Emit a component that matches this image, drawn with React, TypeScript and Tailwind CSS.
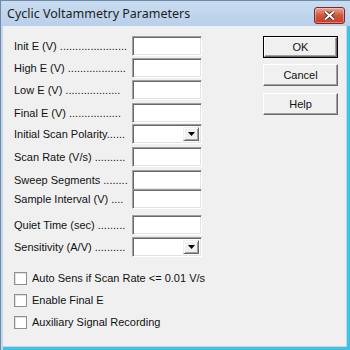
import React from 'react';

const rows: { label: string; top: number; combo?: boolean }[] = [
  { label: 'Init E (V) ......................', top: 10 },
  { label: 'High E (V) ...................', top: 2 },
  { label: 'Low E (V) ..................', top: 2 },
  { label: 'Final E (V) .................', top: 3 },
  { label: 'Initial Scan Polarity......', top: 1, combo: true },
  { label: 'Scan Rate (V/s) ..........', top: 3 },
  { label: 'Sweep Segments ........', top: 3 },
  { label: 'Sample Interval (V) ....', top: -1 },
  { label: 'Quiet Time (sec) .........', top: 6 },
  { label: 'Sensitivity (A/V) ..........', top: 2, combo: true },
];

const checks = ['Auto Sens if Scan Rate <= 0.01 V/s', 'Enable Final E', 'Auxiliary Signal Recording'];

function Field({ combo }: { combo?: boolean }) {
  return (
    <div className="w-[70px] h-[20px] bg-white border border-t-[#a0a0a0] border-l-[#a0a0a0] border-b-white border-r-white shadow-[inset_1px_1px_0_#696969,inset_-1px_-1px_0_#e3e3e3] flex justify-end items-stretch p-[2px]">
      {combo && (
        <div className="w-[16px] bg-[#f0f0f0] border border-t-[#f0f0f0] border-l-[#f0f0f0] border-b-[#696969] border-r-[#696969] shadow-[inset_1px_1px_0_#ffffff,inset_-1px_-1px_0_#a0a0a0] flex items-center justify-center">
          <svg width="7" height="4" viewBox="0 0 7 4">
            <path d="M0 0h7L3.5 4z" fill="#000" />
          </svg>
        </div>
      )}
    </div>
  );
}

function Btn({ label, def }: { label: string; def?: boolean }) {
  return (
    <div
      className={`w-[75px] h-[22px] flex items-center justify-center bg-[#f0f0f0] ${
        def ? 'border border-black' : ''
      }`}
    >
      <div className="w-full h-full flex items-center justify-center border border-t-white border-l-white border-b-[#696969] border-r-[#696969] shadow-[inset_-1px_-1px_0_#a0a0a0]">
        {label}
      </div>
    </div>
  );
}

export default function App() {
  return (
    <div
      className="w-[350px] h-[350px] overflow-hidden flex flex-col bg-[#c2d6ec] border-t border-l border-[#6f8aa8] text-[11px] text-[#111]"
      style={{ fontFamily: '"Liberation Sans", Arial, sans-serif' }}
    >
      {/* Title bar */}
      <div className="h-[25px] shrink-0 flex items-center justify-between pl-[6px] pr-[5px] bg-gradient-to-b from-[#c9dcf0] to-[#b9d0ea]">
        <span className="text-[12.5px] text-[#1e1e1e] mt-[2px]" style={{ fontFamily: '"Noto Sans", sans-serif' }}>
          Cyclic Voltammetry Parameters
        </span>
        <div className="w-[31px] h-[17px] mt-[3px] rounded-[3px] border border-[#7a2a20] bg-gradient-to-b from-[#e8a593] via-[#d2553f] to-[#c2402b] flex items-center justify-center shadow-[inset_0_0_0_1px_rgba(255,255,255,0.35)]">
          <svg width="11" height="9" viewBox="0 0 11 9">
            <path d="M1 0.5L10 8.5M10 0.5L1 8.5" stroke="#4a1a14" strokeWidth="3.4" />
            <path d="M1 0.5L10 8.5M10 0.5L1 8.5" stroke="#ffffff" strokeWidth="2" />
          </svg>
        </div>
      </div>

      {/* Client area */}
      <div className="flex-1 flex ml-[2px] border-r-[3px] border-b-[3px] border-[#38c3ee]">
        <div className="flex-1 bg-[#f0f0f0] border-r border-b border-[#d4d4d4] flex">
          <div className="flex flex-col pl-[11px] w-[205px]">
            {rows.map((r, i) => (
              <div key={i} className="flex items-center" style={{ marginTop: r.top }}>
                <span className="w-[118px] whitespace-nowrap">{r.label}</span>
                <Field combo={r.combo} />
              </div>
            ))}
            <div className="flex flex-col gap-[9px] mt-[15px]">
              {checks.map((c) => (
                <div key={c} className="flex items-center gap-[5px] h-[13px]">
                  <div className="w-[13px] h-[13px] bg-white border border-[#8f8f8f] shadow-[inset_1px_1px_0_#e0e0e0]" />
                  <span className="whitespace-nowrap">{c}</span>
                </div>
              ))}
            </div>
          </div>
          <div className="flex flex-col gap-[6px] pt-[10px] pl-[55px]">
            <Btn label="OK" def />
            <div className="flex flex-col gap-[7px]">
              <Btn label="Cancel" />
              <Btn label="Help" />
            </div>
          </div>
        </div>
      </div>
    </div>
  );
}
